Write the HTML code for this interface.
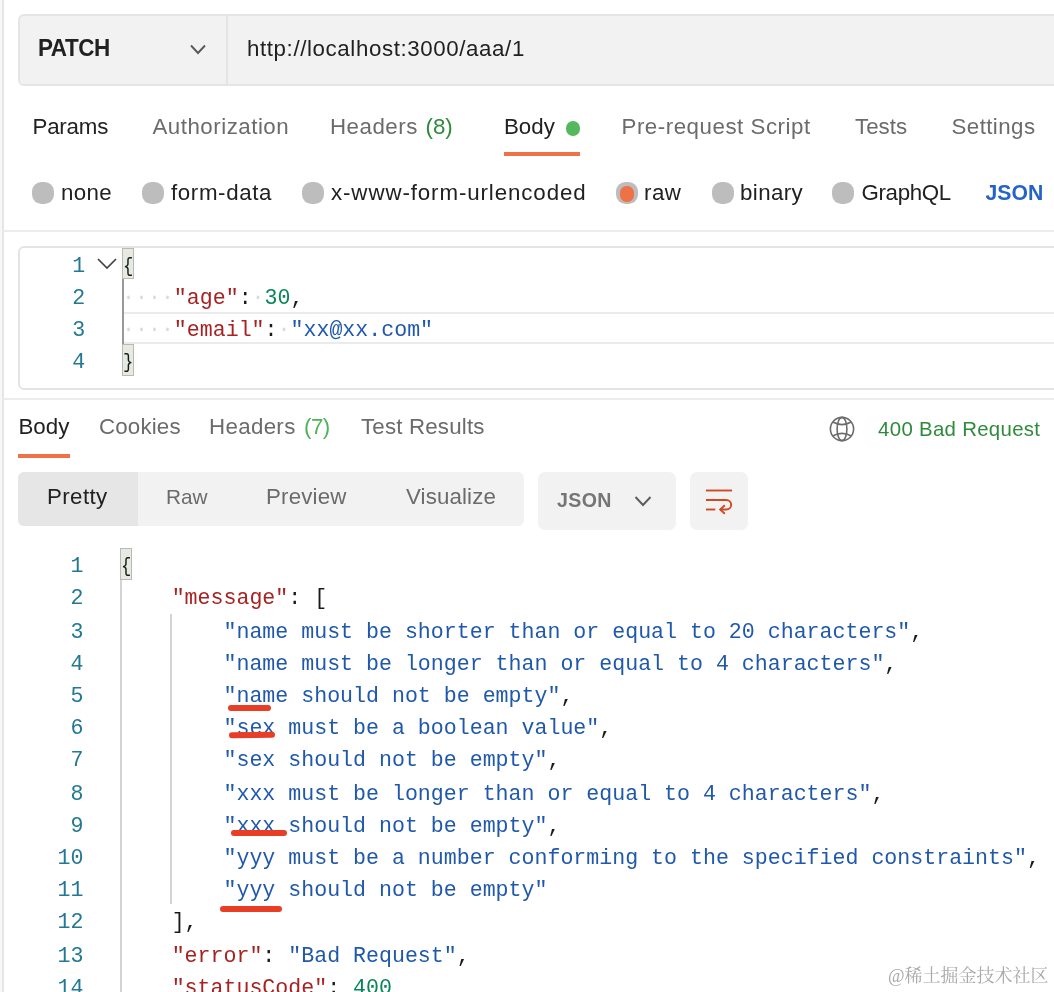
<!DOCTYPE html>
<html lang="en">
<head>
<meta charset="utf-8">
<title>PATCH request</title>
<style>
html,body{margin:0;padding:0;background:#fff;}
body{width:1054px;height:992px;position:relative;overflow:hidden;will-change:transform;font-family:"Liberation Sans",sans-serif;color:#212121;}
.abs{position:absolute;}
.t{position:absolute;white-space:nowrap;margin-top:0.5px;font-size:22.3px;line-height:22px;height:22px;}
.g{color:#6b6b6b;}
.grn{color:#2f8a3c;}
.line{position:absolute;background:#ececec;}
.radio{position:absolute;width:22px;height:22px;border-radius:9.5px;background:#bdbdbd;top:182.3px;}
.code{position:absolute;font-family:"Liberation Mono",monospace;font-size:21.6px;line-height:32px;white-space:pre;color:#1a1a1a;}
.code div{height:32px;}
.ln{position:absolute;font-family:"Liberation Mono",monospace;font-size:21.6px;line-height:32px;color:#237893;text-align:right;white-space:pre;}
.ln div{height:32px;}
.j div:nth-child(3),.j div:nth-child(8),.j div:nth-child(13){margin-top:2px;}
.k{color:#a82222;}
.s{color:#2058ab;}
.n{color:#098658;}
.ws{color:#dadada;}
.br{display:inline-block;transform:scale(.8,.9);transform-origin:35% 62%;}
.bm{position:absolute;box-sizing:border-box;width:11.6px;height:31.4px;background:#e6ebe2;border:1.4px solid #b9b9b9;}
.red{position:absolute;height:6px;border-radius:3px;background:#e83e25;}
</style>
</head>
<body>

<!-- frame lines -->
<div class="abs" style="left:0;top:0;width:2.6px;height:992px;background:#f7f7f7;"></div>
<div class="line" style="left:2.4px;top:0;width:1.6px;height:992px;background:#e6e6e6;"></div>
<div class="line" style="left:3px;top:230px;width:1051px;height:2px;"></div>
<div class="line" style="left:3px;top:397.5px;width:1051px;height:2px;"></div>

<!-- URL bar -->
<div class="abs" style="left:18px;top:14.1px;width:1060px;height:72.4px;box-sizing:border-box;background:#f2f2f2;border:2px solid #e5e5e5;border-radius:6px;"></div>
<div class="abs" style="left:226px;top:15px;width:1.8px;height:70.5px;background:#e4e4e4;"></div>
<span class="t" id="patch" style="left:38.00px;top:37.2px;font-weight:bold;transform:scaleY(1.05);transform-origin:50% 83%;font-size:22.5px;letter-spacing:-0.500px;">PATCH</span>
<svg class="abs" style="left:188px;top:41.3px;" width="20" height="16" viewBox="0 0 20 16"><path d="M3 4.5 L10 12 L17 4.5" fill="none" stroke="#595959" stroke-width="1.9"/></svg>
<span class="t" id="url" style="left:247.00px;top:37px;letter-spacing:0.605px;">http://localhost:3000/aaa/1</span>

<!-- request tabs -->
<span class="t" id="t_params" style="left:32.50px;top:115px;letter-spacing:-0.200px;">Params</span>
<span class="t g" id="t_auth" style="left:152.50px;top:115px;letter-spacing:0.500px;">Authorization</span>
<span class="t g" id="t_headers" style="left:330.00px;top:115px;letter-spacing:0.500px;">Headers</span>
<span class="t grn" id="t_h8" style="left:425.50px;top:115px;letter-spacing:0.000px;">(8)</span>
<span class="t" id="t_body" style="left:504.00px;top:115px;letter-spacing:0.000px;">Body</span>
<div class="abs" style="left:565.5px;top:121.3px;width:14.5px;height:14.5px;border-radius:50%;background:#55b85f;"></div>
<div class="abs" style="left:504px;top:151.5px;width:76px;height:4px;background:#ee7147;"></div>
<span class="t g" id="t_pre" style="left:621.50px;top:115px;letter-spacing:0.528px;">Pre-request Script</span>
<span class="t g" id="t_tests" style="left:855.00px;top:115px;letter-spacing:0.000px;">Tests</span>
<span class="t g" id="t_settings" style="left:951.50px;top:115px;letter-spacing:0.428px;">Settings</span>

<!-- body type row -->
<div class="radio" style="left:32px;"></div>
<span class="t" id="b_none" style="left:61.00px;top:181px;letter-spacing:0.334px;">none</span>
<div class="radio" style="left:142px;"></div>
<span class="t" id="b_form" style="left:171.00px;top:181px;letter-spacing:0.625px;">form-data</span>
<div class="radio" style="left:302px;"></div>
<span class="t" id="b_xwww" style="left:331.00px;top:181px;letter-spacing:0.900px;">x-www-form-urlencoded</span>
<div class="radio" style="left:616px;"></div>
<div class="abs" style="left:620px;top:185.8px;width:14px;height:16.2px;border-radius:6.5px;background:#ee7147;"></div>
<span class="t" id="b_raw" style="left:644.00px;top:181px;letter-spacing:0.500px;">raw</span>
<div class="radio" style="left:711.6px;"></div>
<span class="t" id="b_binary" style="left:740.00px;top:181px;letter-spacing:0.400px;">binary</span>
<div class="radio" style="left:832px;"></div>
<span class="t" id="b_gql" style="left:861.50px;top:181px;letter-spacing:-0.334px;">GraphQL</span>
<span class="t" id="b_json" style="left:985.50px;top:181px;font-weight:bold;color:#2563c9;font-size:21.2px;letter-spacing:-0.000px;">JSON</span>

<!-- request editor -->
<div class="abs" style="left:18px;top:246px;width:1060px;height:143.7px;box-sizing:border-box;border:2px solid #e4e4e4;border-radius:6px;"></div>
<div class="abs" style="left:123px;top:311.9px;width:940px;height:32.3px;box-sizing:border-box;border-top:2.2px solid #ebebeb;border-bottom:2.2px solid #ebebeb;"></div>
<div class="abs" style="left:122px;top:279.3px;width:2px;height:65px;background:#999;"></div>
<div class="bm" style="left:122px;top:248px;"></div>
<div class="bm" style="left:122px;top:344.3px;"></div>
<svg class="abs" style="left:95px;top:254px;" width="24" height="18" viewBox="0 0 24 18"><path d="M3 5 L12 14 L21 5" fill="none" stroke="#444" stroke-width="1.7"/></svg>
<div class="ln" id="ln1" style="left:40px;top:250.3px;width:45.2px;"><div>1</div><div>2</div><div>3</div><div>4</div></div>
<div class="code" id="code1" style="left:122px;top:250.3px;"><div><span class="br">{</span></div><div><span class="ws">····</span><span class="k">"age"</span>:<span class="ws">·</span><span class="n">30</span>,</div><div><span class="ws">····</span><span class="k">"email"</span>:<span class="ws">·</span><span class="s">"xx@xx.com"</span></div><div><span class="br">}</span></div></div>

<!-- response tabs -->
<span class="t" id="r_body" style="left:18.50px;top:415px;letter-spacing:0.000px;">Body</span>
<div class="abs" style="left:18px;top:453.5px;width:52px;height:4px;background:#ee7147;"></div>
<span class="t g" id="r_cookies" style="left:99.00px;top:415px;letter-spacing:0.167px;">Cookies</span>
<span class="t g" id="r_headers" style="left:209.00px;top:415px;letter-spacing:0.334px;">Headers</span>
<span class="t" id="r_h7" style="left:304.00px;top:415px;color:#4fb35a;letter-spacing:-0.500px;">(7)</span>
<span class="t g" id="r_tests" style="left:361.00px;top:415px;letter-spacing:0.181px;">Test Results</span>

<svg class="abs" style="left:828px;top:415px;" width="28" height="28" viewBox="0 0 28 28" fill="none" stroke="#6b6b6b" stroke-width="1.6"><circle cx="14" cy="14" r="11.6"/><ellipse cx="14" cy="14" rx="4.9" ry="11.6"/><path d="M4.8 7 Q14 12.2 23.2 7 M4.8 21 Q14 15.8 23.2 21"/></svg>
<span class="t" id="status" style="left:878.10px;top:417.3px;font-size:20.4px;color:#2f8a3c;letter-spacing:0.307px;">400 Bad Request</span>

<!-- view switch -->
<div class="abs" style="left:18px;top:472px;width:506px;height:53.5px;border-radius:6px;background:#f2f2f2;"></div>
<div class="abs" style="left:18px;top:472px;width:119.5px;height:53.5px;border-radius:6px 0 0 6px;background:#e6e6e6;"></div>
<span class="t" id="v_pretty" style="left:47.00px;top:485px;letter-spacing:0.400px;">Pretty</span>
<span class="t g" id="v_raw" style="left:166.00px;top:485px;font-size:20.8px;letter-spacing:0.000px;">Raw</span>
<span class="t g" id="v_preview" style="left:266.00px;top:485px;letter-spacing:0.167px;">Preview</span>
<span class="t g" id="v_visual" style="left:406.00px;top:485px;letter-spacing:0.125px;">Visualize</span>
<div class="abs" style="left:538px;top:472px;width:138px;height:57.5px;border-radius:7px;background:#f2f2f2;"></div>
<span class="t g" id="v_json" style="left:557.00px;top:488.7px;font-size:19.6px;font-weight:bold;color:#757575;letter-spacing:0.333px;">JSON</span>
<svg class="abs" style="left:632px;top:493px;" width="22" height="16" viewBox="0 0 22 16"><path d="M3.5 4 L11 12 L18.5 4" fill="none" stroke="#5c5c5c" stroke-width="1.9"/></svg>
<div class="abs" style="left:690px;top:472px;width:57.5px;height:57.5px;border-radius:7px;background:#f2f2f2;"></div>
<svg class="abs" style="left:700px;top:482px;" width="40" height="36" viewBox="0 0 40 36" fill="none" stroke="#cf4a22" stroke-width="1.9"><path d="M6 8.5 H32.1"/><path d="M6 18 H26.4 A4.75 4.75 0 0 1 26.4 27.5 H20.2"/><path d="M24.8 23.2 L20.2 27.5 L24.8 31.8"/><path d="M6 27.5 H15.3"/></svg>

<!-- response code -->
<div class="abs" style="left:120.1px;top:579px;width:1.6px;height:420px;background:#d3d3d3;"></div>
<div class="abs" style="left:170.1px;top:613.8px;width:1.6px;height:290px;background:#d3d3d3;"></div>
<div class="bm" style="left:120px;top:548.2px;"></div>
<div class="ln j" id="ln2" style="left:40px;top:550.4px;width:43.5px;"><div>1</div><div>2</div><div>3</div><div>4</div><div>5</div><div>6</div><div>7</div><div>8</div><div>9</div><div>10</div><div>11</div><div>12</div><div>13</div><div>14</div></div>
<div class="code j" id="code2" style="left:119.8px;top:550.4px;"><div><span class="br">{</span></div><div>    <span class="k">"message"</span>: [</div><div>        <span class="s">"name must be shorter than or equal to 20 characters"</span>,</div><div>        <span class="s">"name must be longer than or equal to 4 characters"</span>,</div><div>        <span class="s">"name should not be empty"</span>,</div><div>        <span class="s">"sex must be a boolean value"</span>,</div><div>        <span class="s">"sex should not be empty"</span>,</div><div>        <span class="s">"xxx must be longer than or equal to 4 characters"</span>,</div><div>        <span class="s">"xxx should not be empty"</span>,</div><div>        <span class="s">"yyy must be a number conforming to the specified constraints"</span>,</div><div>        <span class="s">"yyy should not be empty"</span></div><div>    ],</div><div>    <span class="k">"error"</span>: <span class="s">"Bad Request"</span>,</div><div>    <span class="k">"statusCode"</span>: <span class="n">400</span></div></div>

<!-- hand-drawn red marks -->
<div class="red" style="left:228px;top:704.7px;width:43.2px;"></div>
<div class="red" style="left:228.5px;top:732.2px;width:45.5px;transform:rotate(-0.6deg);"></div>
<div class="red" style="left:230.7px;top:830.3px;width:56.2px;"></div>
<div class="red" style="left:220px;top:906px;width:62.2px;"></div>

<!-- watermark -->
<span class="abs" id="wm" style="left:888px;top:964.3px;font-family:'Liberation Serif','Noto Serif CJK SC',serif;font-size:18px;line-height:24px;white-space:nowrap;color:#a9a9a9;text-shadow:0 0 2px #fff,0 0 1px #fff;">@稀土掘金技术社区</span>

</body>
</html>
